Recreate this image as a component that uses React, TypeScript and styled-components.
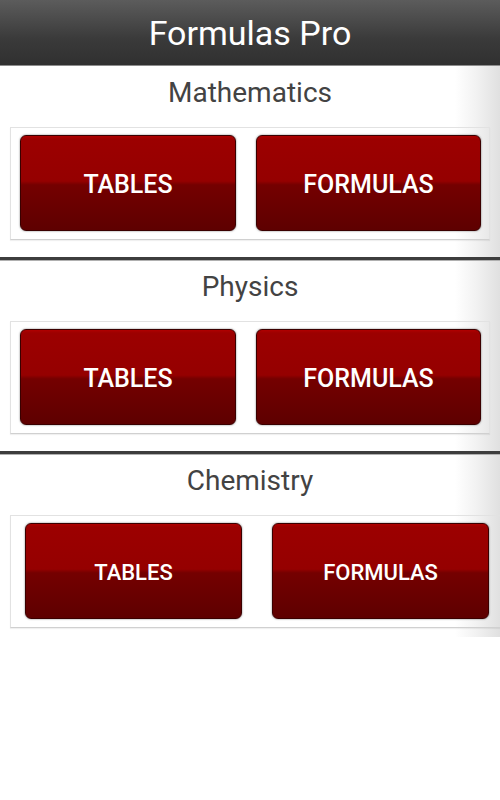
import React from 'react';
import styled, { createGlobalStyle } from 'styled-components';

interface Subject {
  name: string,
  wide?: boolean,
}

const subjects: Array<Subject> = [
  { name: 'Mathematics' },
  { name: 'Physics' },
  { name: 'Chemistry', wide: true },
];

const App = () => {
  return (
    <Page>
      <GlobalStyle />
      <Header>Formulas Pro</Header>
      <Content>
        {subjects.map((s, i) => (
          <Section key={s.name} $last={i === subjects.length - 1}>
            <SubjectTitle>{s.name}</SubjectTitle>
            <Card $wide={s.wide}>
              <RedButton $wide={s.wide} $w={s.wide ? 217 : 216}>TABLES</RedButton>
              <RedButton $wide={s.wide} $w={s.wide ? 217 : 225}>FORMULAS</RedButton>
            </Card>
          </Section>
        ))}
      </Content>
    </Page>
  )
};

const GlobalStyle = createGlobalStyle`
  body {
    margin: 0;
    background: #ffffff;
    font-family: Roboto, "Liberation Sans", sans-serif;
  }
`

const Page = styled.div`
  width: 500px;
  height: 800px;
  overflow: hidden;
  background: #ffffff;
`

const Header = styled.div`
  height: 66px;
  box-sizing: border-box;
  display: flex;
  align-items: center;
  justify-content: center;
  background: linear-gradient(#5c5c5c, #3a3a3a 60%, #303030);
  border-bottom: 1px solid #8c8c8c;
  color: #ffffff;
  font-size: 34px;
  padding-top: 1px;
`

const Content = styled.div`
  background: linear-gradient(to right, #ffffff 0, #ffffff 455px, #f2f2f2 476px, #e0e0e0 500px);
  padding-bottom: 9px;
`

const Section = styled.div<{ $last?: boolean }>`
  display: flex;
  flex-direction: column;
  padding-bottom: ${p => (p.$last ? '0' : '17px')};
  border-bottom: ${p => (p.$last ? 'none' : '3px solid #3d3d3d')};
  box-shadow: ${p => (p.$last ? 'none' : '0 1px 0 #b0b0b0')};
`

const SubjectTitle = styled.div`
  height: 61px;
  display: flex;
  align-items: center;
  justify-content: center;
  color: #434343;
  font-size: 28px;
  padding-bottom: 8px;
  box-sizing: border-box;
`

const Card = styled.div<{ $wide?: boolean }>`
  margin-left: 10px;
  width: ${p => (p.$wide ? '500px' : '480px')};
  height: 113px;
  box-sizing: border-box;
  border: 1px solid #e2e2e2;
  border-bottom-color: #d0d0d0;
  box-shadow: 0 1px 1px rgba(0, 0, 0, 0.06);
  display: flex;
  gap: ${p => (p.$wide ? '30px' : '20px')};
  padding: 7px 0 0 ${p => (p.$wide ? '14px' : '9px')};
`

const RedButton = styled.div<{ $wide?: boolean, $w: number }>`
  width: ${p => p.$w}px;
  height: 96px;
  box-sizing: border-box;
  border: 1px solid #3a0000;
  border-radius: 6px;
  background: linear-gradient(#b00000 0, #9c0000 3px, #950000 48%, #740000 52%, #5e0000 100%);
  box-shadow: 0 0 2px rgba(0, 0, 0, 0.55);
  display: flex;
  align-items: center;
  justify-content: center;
  color: #ffffff;
  font-weight: 500;
  font-size: ${p => (p.$wide ? '22px' : '25px')};
  padding-top: 3px;
`

export default App;
